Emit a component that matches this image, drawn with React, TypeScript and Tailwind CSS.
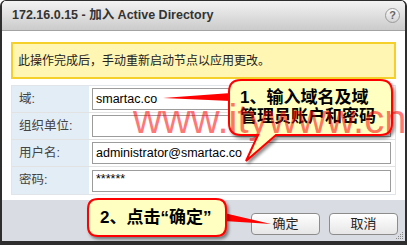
import React from "react";

const fields = [
  { label: "域:", value: "smartac.co" },
  { label: "组织单位:", value: "" },
  { label: "用户名:", value: "administrator@smartac.co" },
  { label: "密码:", value: "******" },
];

function HelpIcon() {
  return (
    <div className="flex h-[15px] w-[15px] items-center justify-center rounded-full border border-[#9a9a9a] bg-gradient-to-b from-[#fafafa] to-[#d4d4d4] text-[11px] font-bold leading-none text-[#666]">
      ?
    </div>
  );
}

function Grip() {
  const dots = [
    [6, 0],
    [4, 2], [6, 2],
    [2, 4], [4, 4], [6, 4],
    [0, 6], [2, 6], [4, 6], [6, 6],
  ];
  return (
    <svg width="8" height="8" className="absolute bottom-[1px] right-[1px]">
      {dots.map(([x, y]) => (
        <rect key={`${x}-${y}`} x={x} y={y} width="1" height="1" fill="#8a8a8a" />
      ))}
    </svg>
  );
}

function Callouts() {
  return (
    <>
      <svg width="407" height="245" className="pointer-events-none absolute left-0 top-0">
        <defs>
          <filter id="sh" x="-10%" y="-10%" width="130%" height="140%">
            <feDropShadow dx="2" dy="2.5" stdDeviation="1.5" floodColor="#000" floodOpacity="0.45" />
          </filter>
        </defs>
        <polygon points="163,98 231,93 231,101" fill="#f00" />
        <path
          d="M241 80 H380 Q392 80 392 92 V123 Q392 135 380 135 H276 L246 161 L258 135 H241 Q229 135 229 123 V92 Q229 80 241 80 Z"
          fill="#ffffc2"
          stroke="#f00"
          strokeWidth="2"
          filter="url(#sh)"
        />
        <polygon points="224,213 271,224 224,221" fill="#f00" />
        <path
          d="M98 199 H216 Q226 199 226 209 V226 Q226 236 216 236 H98 Q88 236 88 226 V209 Q88 199 98 199 Z"
          fill="#ffffc2"
          stroke="#f00"
          strokeWidth="2"
          filter="url(#sh)"
        />
      </svg>
      <div className="pointer-events-none absolute left-[240px] top-[88px] text-[17px] font-bold leading-[19px] text-black">
        1、输入域名及域
        <br />
        管理员账户和密码
      </div>
      <div className="pointer-events-none absolute left-[100px] top-[208px] whitespace-nowrap text-[17px] font-bold leading-[19px] text-black">
        2、点击“确定”
      </div>
    </>
  );
}

export default function App() {
  return (
    <div className="relative h-[245px] w-[407px] overflow-hidden bg-white font-['Liberation_Sans','Noto_Sans_CJK_SC',sans-serif] text-[#333]">
      <div className="flex h-full flex-col overflow-hidden rounded-t-[6px] border-x-2 border-b-4 border-t border-[#2e2e2e] bg-white">
        <div className="flex h-[30px] shrink-0 items-center justify-between border-b border-[#a3a3a3] bg-gradient-to-b from-[#f3f3f3] to-[#cbcbcb] pl-[10px] pr-[5px]">
          <span className="text-[12.5px] font-bold text-[#333]">172.16.0.15 - 加入 Active Directory</span>
          <HelpIcon />
        </div>

        <div className="flex-1 px-[9px] pt-[11px]">
          <div className="flex h-[37px] items-center border-2 border-[#f5cf2a] bg-[#fff6b4] pl-[5px] text-[12px] text-[#222]">
            此操作完成后，手动重新启动节点以应用更改。
          </div>

          <div className="mt-[6px] border border-[#e1e5ea]">
            {fields.map((f, i) => (
              <div
                key={f.label}
                className={`flex h-[27px] ${i < fields.length - 1 ? "border-b border-[#e2e2e2]" : ""}`}
              >
                <div className="flex w-[77px] shrink-0 items-center bg-[#e3edf5] pl-[7px] text-[12.5px] text-[#444]">
                  {f.label}
                </div>
                <div className="flex flex-1 items-center pl-[3px] pr-[4px]">
                  <div
                    className={`flex h-[22px] flex-1 border border-[#9c9c9c] bg-white pl-[3px] text-[12.5px] text-black ${
                      f.label === "密码:" ? "items-start pt-[1px] leading-[14px]" : "items-center"
                    }`}
                  >
                    {f.value}
                  </div>
                </div>
              </div>
            ))}
          </div>
        </div>

        <div className="relative flex h-[41px] shrink-0 items-start justify-end gap-[9px] bg-[#d9dde3] pr-[7px] pt-[13px]">
          <button className="h-[22px] w-[69px] rounded-[4px] border border-[#8c8c8c] bg-gradient-to-b from-white to-[#e6e6e6] text-[13px] text-[#222]">
            确定
          </button>
          <button className="h-[22px] w-[69px] rounded-[4px] border border-[#8c8c8c] bg-gradient-to-b from-white to-[#e6e6e6] text-[13px] text-[#222]">
            取消
          </button>
          <Grip />
        </div>
      </div>

      <Callouts />

      <div className="pointer-events-none absolute left-[133px] top-[99px] whitespace-nowrap text-[40px] leading-[40px] text-[rgba(255,0,0,0.55)]">
        www.itywww.cn
      </div>
    </div>
  );
}
